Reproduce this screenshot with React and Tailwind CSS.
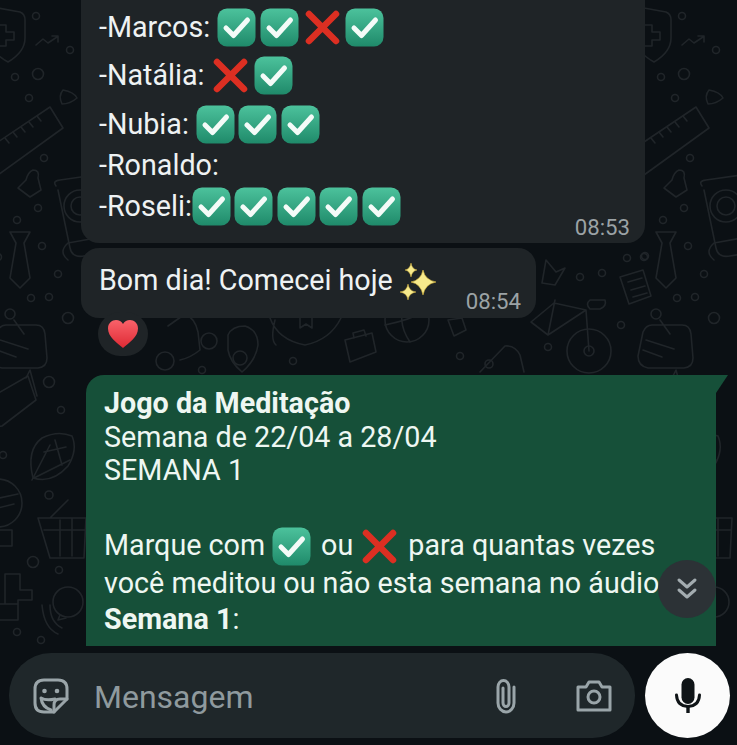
import { useId } from "react";

const CheckEmoji = ({ className = "" }) => {
	const id = useId();
	return (
		<svg viewBox="0 0 39 39" className={`w-[39px] h-[39px] shrink-0 ${className}`}>
			<defs>
				<linearGradient id={id} x1="0" y1="0" x2="0" y2="1">
					<stop offset="0" stopColor="#4cc29c" />
					<stop offset="1" stopColor="#1f8a6a" />
				</linearGradient>
			</defs>
			<rect x="0.5" y="0.5" width="38" height="38" rx="9.5" fill={`url(#${id})`} />
			<path d="M9 20 L16.5 27.5 L30.5 12" fill="none" stroke="#f4fbf8" strokeWidth="5" strokeLinecap="round" strokeLinejoin="round" />
		</svg>
	);
};

const CrossEmoji = ({ className = "" }) => (
	<svg viewBox="0 0 35 35" className={`w-[35px] h-[35px] shrink-0 ${className}`}>
		<path d="M4 4 L31 31 M31 4 L4 31" stroke="#dc2f22" strokeWidth="6.5" strokeLinecap="round" />
	</svg>
);

const Sparkles = () => (
	<svg viewBox="0 0 40 40" className="w-[40px] h-[40px] shrink-0">
		<path d="M24 8 Q26 18 37 20 Q26 22 24 33 Q22 22 12 20 Q22 18 24 8Z" fill="#f7ea8c" stroke="#d7b53a" strokeWidth="0.6" />
		<path d="M12 1 Q13 7 18 8 Q13 9 12 15 Q11 9 6 8 Q11 7 12 1Z" fill="#f7ea8c" stroke="#d7b53a" strokeWidth="0.5" />
		<path d="M9 22 Q10 29 17 30 Q10 31 9 38 Q8 31 1 30 Q8 29 9 22Z" fill="#f7ea8c" stroke="#d7b53a" strokeWidth="0.5" />
	</svg>
);

const Heart = () => (
	<svg viewBox="0 0 32 30" className="w-[32px] h-[30px]">
		<defs>
			<linearGradient id="heart-fill" x1="0" y1="0" x2="0" y2="1">
				<stop offset="0" stopColor="#f9626a" />
				<stop offset="1" stopColor="#de2a34" />
			</linearGradient>
		</defs>
		<path d="M16 29 C10 24 1 18 1 9.5 C1 4 5 1 9 1 C12 1 14.500 2.500 16 5 C17.500 2.500 20 1 23 1 C27 1 31 4 31 9.500 C31 18 22 24 16 29Z" fill="url(#heart-fill)" />
	</svg>
);

const Doodles = () => (
	<>
		{/* shield */}
		<path d="M-2 8 L20 12 Q25 14 25 20 V38 Q25 52 8 62 Q-10 52 -12 38" />
		<path d="M-2 25 H6 V32 H14 V40 H6 V46 H-2" />
		<circle cx="36" cy="16" r="3.500" />
		<circle cx="70" cy="50" r="3.500" />
		<circle cx="15" cy="77" r="3.500" />
		<circle cx="38" cy="74" r="5.500" />
		<circle cx="29" cy="98" r="3.500" />
		<path d="M36 45 L43 39 L48 43 L57 37 M52 36 H58 V42" />
		<path d="M63 90 Q74 92 77 98 Q70 104 62 104 Q58 96 63 90Z" />
		{/* ruler */}
		<path d="M-2 142 L50 107 L63 128 L-2 175" />
		<path d="M5 138 L9 143 M13 132 L17 137 M21 127 L25 132 M29 122 L33 127 M37 116 L41 121" />
		<circle cx="44" cy="158" r="3.500" />
		<path d="M33 170 Q40 170 38 178 L41 190 L30 197 L18 188 L26 180 Q28 172 33 170Z" />
		<circle cx="38" cy="208" r="3.500" />
		<circle cx="17" cy="220" r="3.500" />
		{/* tie */}
		<path d="M10 232 H30 L24 243 L30 278 L20 288 L10 278 L16 243Z" />
		<circle cx="42" cy="246" r="3.500" />
		<circle cx="58" cy="274" r="3.500" />
		<circle cx="-2" cy="257" r="3.500" />
		<circle cx="49" cy="297" r="3.500" />
		<circle cx="31" cy="298" r="3.500" />
		<circle cx="68" cy="318" r="5.500" />
		{/* notepad with pin */}
		<circle cx="10" cy="314" r="5" />
		<path d="M14 320 L24 334 M6 325 H36 Q44 325 45 334 L47 358 Q47 367 38 368 H2 Q-8 366 -8 356 L-3 332 Q0 325 6 325Z" />
		<path d="M0 340 L28 349 M-3 350 L16 357" />
		{/* tv frame */}
		<path d="M56 186 Q52 181 60 180 L95 175 M58 190 L70 248 Q72 258 84 256 L96 254" />
		<circle cx="80" cy="206" r="16" />
		<circle cx="80" cy="206" r="9" />
		<path d="M68 260 Q58 252 68 243 L96 238" />
		{/* bottle */}
		<path d="M-5 395 L28 376 L36 400 L2 426 Q-6 428 -8 418Z M26 378 L30 370 L37 396" />
		<circle cx="49" cy="382" r="5.500" />
		<circle cx="61" cy="410" r="3.500" />
		<circle cx="3" cy="455" r="3.500" />
		{/* corn */}
		<path d="M33 478 Q26 450 42 438 Q58 430 72 436 Q78 450 68 466 Q52 484 33 478Z" />
		<path d="M32 480 L50 445 M34 478 L70 460 M55 440 L62 465 M44 452 L66 447" />
		<circle cx="49" cy="495" r="4" />
		{/* plate */}
		<circle cx="-2" cy="503" r="24" />
		<path d="M-10 500 L18 494 M-10 510 L14 504" />
		<path d="M-2 530 H12 V546 H-2" />
		{/* basket */}
		<path d="M38 518 H86 L84 558 H50Z M50 518 L68 500 M44 530 H85 M60 520 V556 M72 518 V556" />
		<circle cx="33" cy="562" r="5.500" />
		<circle cx="59" cy="570" r="3.500" />
		{/* plus blocks */}
		<path d="M5 574 H20 V590 H32 V600 H18 V620 H-4 V604 H5Z M-4 604 H18" />
		<circle cx="17" cy="632" r="3.500" />
		<circle cx="41" cy="640" r="3.500" />
		{/* speaker */}
		<circle cx="68" cy="602" r="15" />
		<path d="M60 615 L58 620 L66 618" />
		<path d="M50 605 Q50 622 62 628 M42 605 Q44 628 58 634" />
	</>
);

// trama do papel de parede, o mesmo bloco repete a cada 646px
const Wallpaper = () => (
	<svg className="absolute inset-0 w-full h-full" viewBox="0 0 737 745" fill="none" stroke="#202529" strokeWidth="1.600" strokeLinecap="round" strokeLinejoin="round">
		<Doodles />
		<g transform="translate(646 0)">
			<Doodles />
		</g>
		{/* bicicleta e cia, entre os balões */}
		<circle cx="589" cy="351" r="22" />
		<circle cx="589" cy="351" r="5" />
		<path d="M589 351 L586 310 L548 335 L531 322 L554 303 L586 310 M548 335 L555 300 M590 300 H605 Q607 306 600 309 H590Q585 304 590 300Z" />
		<path d="M542 283 L546 260 L556 272 L565 268 L555 285Z" />
		<circle cx="580" cy="277" r="3.500" />
		<circle cx="602" cy="273" r="3.500" />
		<circle cx="627" cy="258" r="3.500" />
		<circle cx="645" cy="256" r="3.500" />
		<circle cx="621" cy="325" r="3.500" />
		<path d="M620 277 L643 270 L651 296 L629 304Z M628 282 L642 278 M631 290 L645 286 M633 297 L647 293" />
		{/* abaixo do balão verde */}
		<circle cx="209" cy="341" r="8" />
		<path d="M168 326 L185 314 Q195 318 198 332 L200 350 Q190 358 180 360" />
		<circle cx="165" cy="361" r="9" />
		<path d="M228 335 Q232 326 245 326 Q258 330 258 345 Q256 360 242 372 Q230 362 228 350Z" />
		<circle cx="240" cy="358" r="7" />
		<path d="M270 318 Q278 340 305 345 Q330 340 341 318 M300 318 V328 L306 324 L312 328 V318 M275 320 Q270 340 276 345" />
		<circle cx="293" cy="361" r="3.500" />
		<path d="M345 340 L372 333 L376 352 L350 362Z M354 338 L353 333 L364 330 L366 336" />
		<circle cx="407" cy="320" r="22" />
		<path d="M385 325 Q410 320 428 310 M407 298 Q395 320 410 342" />
		<path d="M448 320 L462 318 L466 330 L454 336Z" />
		<circle cx="460" cy="356" r="3.500" />
		<path d="M480 372 L505 346 Q515 345 520 355 L524 372" />
		<circle cx="489" cy="364" r="4" />
		<circle cx="548" cy="347" r="3.500" />
		<circle cx="202" cy="370" r="3.500" />
	</svg>
);

const Row = ({ children, className = "" }) => (
	<div className={`flex items-center h-[39px] ${className}`}>{children}</div>
);

const StickerIcon = () => (
	<svg viewBox="0 0 36 36" className="w-[36px] h-[36px]" fill="none" stroke="#9aa5a9" strokeWidth="3" strokeLinejoin="round" strokeLinecap="round">
		<path d="M11 2 H25 Q34 2 34 11 V21 L21 34 H11 Q2 34 2 25 V11 Q2 2 11 2Z" />
		<path d="M34 21 H27 Q21 21 21 27 V34" />
		<path d="M8 20 Q13 23 22 21 M8 20 Q9 29 18 32" />
		<circle cx="11.500" cy="13" r="2.300" fill="#9aa5a9" stroke="none" />
		<circle cx="24" cy="13" r="2.300" fill="#9aa5a9" stroke="none" />
	</svg>
);

const ClipIcon = () => (
	<svg viewBox="0 0 24 36" className="w-[24px] h-[36px]" fill="none" stroke="#9aa5a9" strokeWidth="3" strokeLinecap="round">
		<path d="M20 9 V25 A8 9 0 0 1 4 25 V9 A5.500 6.500 0 0 1 15 9 V25 A3 3.500 0 0 1 9 25 V10" />
	</svg>
);

const CameraIcon = () => (
	<svg viewBox="0 0 36 32" className="w-[36px] h-[32px]" fill="none" stroke="#9aa5a9" strokeWidth="3" strokeLinejoin="round">
		<path d="M2 7 H10 L13 2 H23 L26 7 H34 V30 H2Z" />
		<circle cx="18" cy="17" r="6" />
	</svg>
);

const MicIcon = () => (
	<svg viewBox="0 0 26 36" className="w-[26px] h-[36px]">
		<rect x="6.500" y="0" width="13" height="26" rx="6.500" fill="#0f1417" />
		<path d="M1.500 17 Q2 28 13 28.500 Q24 28 24.500 17" fill="none" stroke="#0f1417" strokeWidth="3" strokeLinecap="round" />
		<rect x="11.300" y="28" width="3.400" height="7" fill="#0f1417" />
	</svg>
);

const ChevronsIcon = () => (
	<svg viewBox="0 0 24 24" className="w-[24px] h-[24px]" fill="none" stroke="#a3acb0" strokeWidth="3" strokeLinecap="round" strokeLinejoin="round">
		<path d="M4 3 L12 10 L20 3 M4 13 L12 20 L20 13" />
	</svg>
);

export default function App() {
	return (
		<div className="relative w-[737px] h-[745px] overflow-hidden bg-[#0b1014] font-['Roboto',sans-serif] text-[28.700px] text-[#eef2f3]">
			<Wallpaper />
			<div className="relative flex flex-col h-full">
				<main className="relative h-[646px] overflow-hidden">
					<section className="relative ml-[81px] w-[564px] h-[243px] rounded-b-[18px] bg-[#1f2427] pl-[18px] pt-[8px]">
						<Row>
							<span className="mr-[7px]">-Marcos:</span>
							<CheckEmoji className="mr-[4px]" />
							<CheckEmoji className="mr-[6px]" />
							<CrossEmoji className="mr-[5px]" />
							<CheckEmoji />
						</Row>
						<Row className="mt-[9px]">
							<span className="mr-[8px]">-Natália:</span>
							<CrossEmoji className="mr-[6px]" />
							<CheckEmoji />
						</Row>
						<Row className="mt-[10px]">
							<span className="mr-[7px]">-Nubia:</span>
							<CheckEmoji className="mr-[3.500px]" />
							<CheckEmoji className="mr-[3.500px]" />
							<CheckEmoji />
						</Row>
						<div className="h-[31px] mt-[6px] leading-[31px]">-Ronaldo:</div>
						<Row className="mt-[6px]">
							<span>-Roseli:</span>
							<CheckEmoji className="mr-[3.500px]" />
							<CheckEmoji className="mr-[3.500px]" />
							<CheckEmoji className="mr-[3.500px]" />
							<CheckEmoji className="mr-[3.500px]" />
							<CheckEmoji />
						</Row>
						<span className="absolute right-[15px] bottom-[4px] text-[22.200px] leading-[24px] text-[#9ba2a5]">08:53</span>
					</section>

					<section className="relative ml-[81px] mt-[5px] w-[455px] h-[70px] rounded-[18px] bg-[#1f2427] pl-[18px] pt-[14px] flex items-start">
						<span className="leading-[36px] mr-[6px]">Bom dia! Comecei hoje</span>
						<Sparkles />
						<span className="absolute right-[15px] bottom-[5px] text-[22.200px] leading-[24px] text-[#9ba2a5]">08:54</span>
					</section>

					<div className="ml-[98px] -mt-[6px] relative w-[50px] h-[44px] rounded-full bg-[#1f2427] flex items-center justify-center">
						<Heart />
					</div>

					<section className="relative ml-[86px] mt-[19px] w-[630px] h-[300px] rounded-tl-[18px] bg-[#165039] pl-[18px] pt-[12px] text-[#eef7f2] leading-[33.500px]">
						<span className="absolute -right-[12px] top-0 w-[12px] h-[18px] bg-[#165039] [clip-path:polygon(0_0,100%_0,0_100%)]" />
						<div className="font-bold">Jogo da Meditação</div>
						<div>Semana de 22/04 a 28/04</div>
						<div>SEMANA 1</div>
						<Row className="mt-[39px]">
							<span className="mr-[7px]">Marque com</span>
							<CheckEmoji className="mr-[10px]" />
							<span className="mr-[9px]">ou</span>
							<CrossEmoji className="mr-[11px]" />
							<span>para quantas vezes</span>
						</Row>
						<div className="mt-[1px]">você meditou ou não esta semana no áudio</div>
						<div className="mt-[3px]">
							<b>Semana 1</b>:
						</div>
					</section>

					<button className="absolute left-[658px] top-[560px] w-[58px] h-[58px] rounded-full bg-[#2c3236] flex items-center justify-center">
						<ChevronsIcon />
					</button>
				</main>

				<footer className="flex items-start pt-[7px] pl-[9px] pr-[7px]">
					<div className="flex items-center w-[626px] h-[85px] rounded-[42px] bg-[#1f272a] pl-[24px] pr-[23px]">
						<StickerIcon />
						<span className="ml-[25px] flex-1 pt-[3px] text-[#8f9a9e] text-[32px]">Mensagem</span>
						<ClipIcon />
						<span className="ml-[58px]">
							<CameraIcon />
						</span>
					</div>
					<button className="ml-[10px] w-[85px] h-[85px] rounded-full bg-[#fbfbfb] flex items-center justify-center">
						<MicIcon />
					</button>
				</footer>
			</div>
		</div>
	);
}
